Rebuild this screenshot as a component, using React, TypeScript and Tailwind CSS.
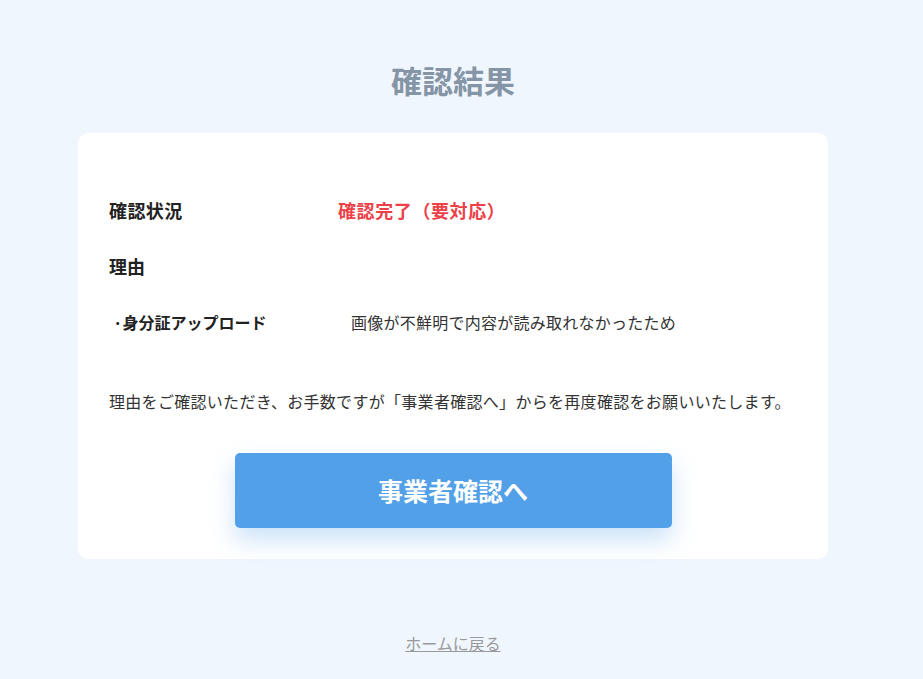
const jp = { fontFamily: '"Noto Sans CJK JP", "Noto Sans", sans-serif' };

export default function App() {
  return (
    <div className="min-h-[679px] w-full bg-[#f0f6fe]" style={jp}>
      <div className="w-[906px] flex flex-col items-center pt-[57px]">
        <h1 className="text-[31px] leading-[45px] font-bold text-[#8595a6]">確認結果</h1>

        <div className="mt-[31px] w-[750px] bg-white rounded-[10px] px-[31px] pt-[49px] pb-[31px]">
          <div className="h-[56px] flex items-center">
            <span className="w-[229px] text-[18px] font-bold text-[#222] tracking-[0.4px]">確認状況</span>
            <span className="text-[18px] font-bold text-[#ec4148] tracking-[0.6px]">確認完了（要対応）</span>
          </div>
          <div className="h-[56px] flex items-center">
            <span className="text-[18px] font-bold text-[#222]">理由</span>
          </div>
          <div className="h-[56px] flex items-center">
            <span className="w-[242px] pl-[4px] text-[16px] font-bold text-[#222]">·身分証アップロード</span>
            <span className="text-[16px] text-[#333] tracking-[0.25px]">画像が不鮮明で内容が読み取れなかったため</span>
          </div>

          <p className="mt-[39px] text-[16px] leading-[24px] text-[#333] tracking-[0.3px]">
            理由をご確認いただき、お手数ですが「事業者確認へ」からを再度確認をお願いいたします。
          </p>

          <div className="mt-[40px] flex justify-center">
            <button className="w-[437px] h-[75px] rounded-[5px] bg-[#52a0e8] text-white text-[25px] font-bold shadow-[0_12px_24px_rgba(82,160,232,0.3)]">
              事業者確認へ
            </button>
          </div>
        </div>

        <a href="#" className="mt-[72px] text-[16px] leading-[24px] text-[#999] underline">
          ホームに戻る
        </a>
      </div>
    </div>
  );
}
